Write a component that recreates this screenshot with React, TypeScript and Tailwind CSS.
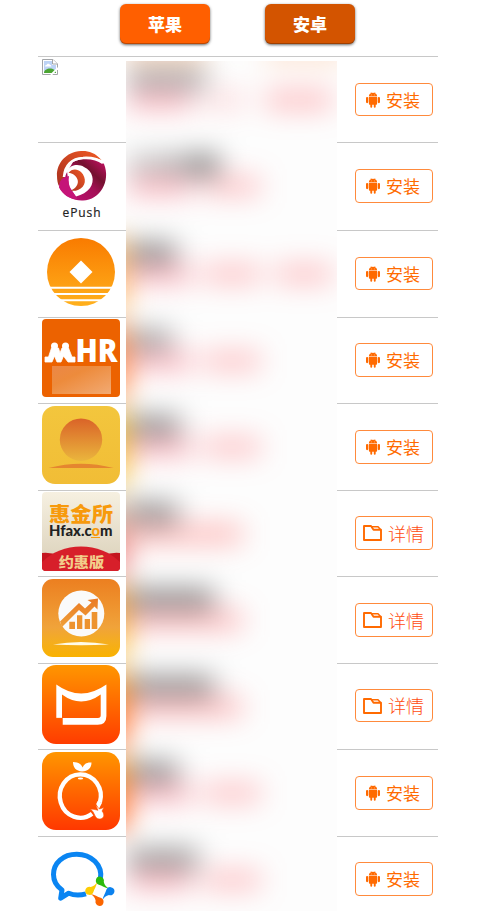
import React from 'react';

const cjk = 'font-["Noto_Sans_CJK_SC",sans-serif]';

function Missing() {
  return (
    <svg width="16" height="16" viewBox="0 0 16 16" className="block">
      <path d="M.5.5h10.500l4.500 4.500v10.500H.5z" fill="#fff" stroke="#a3a5a8" />
      <path d="M2 2h8v4h4v8H2z" fill="#bdd3f5" />
      <path d="M10.500.5V5h5" fill="#fff" stroke="#a3a5a8" />
      <path d="M3 7.500c0-1.400 1-1.600 1.500-1.600C5 4.300 7.500 4.300 8 6c1 0 1.300.5 1.300 1.500z" fill="#fff" />
      <path d="M2 14c0-3 3-4.500 6-4.500s6 1.500 6 4.500z" fill="#4ca532" />
      <path d="M9 16l7-7" stroke="#fff" strokeWidth="1.800" />
    </svg>
  );
}

function EPush() {
  return (
    <svg width="78" height="78" viewBox="0 0 78 78" className="block">
      <defs>
        <linearGradient id="epM" x1="0" y1="1" x2="1" y2="0">
          <stop offset="0" stopColor="#c4107a" />
          <stop offset=".5" stopColor="#a30f55" />
          <stop offset=".68" stopColor="#74112f" />
          <stop offset="1" stopColor="#d0106c" />
        </linearGradient>
        <linearGradient id="epO" x1="0" y1="1" x2="1" y2="0">
          <stop offset="0" stopColor="#a8301f" />
          <stop offset="1" stopColor="#f05a24" />
        </linearGradient>
      </defs>
      <path d="M31 17c10-5 25-5 31 2 7 17-4 36-21 36.500-9 .5-18-4-23-12 0-5 1-9 4-11z" fill="url(#epM)" />
      <path d="M25 26c4-7 12-7 17-4 9 4 11 14 6 21-3 4-8 7-14 8.500l-7-9z" fill="#fff" />
      <path d="M59.500 15C53 7 45 5.500 39 6 24 7 14.500 18 15 31c0 4 .8 8 2 10l5-7c.5-12 7-20 19-21.500 7-.5 13 .5 18.500 2.500z" fill="url(#epO)" />
      <path d="M22 32C23 20 30 13.500 41 13c7-.5 14 .5 20 5" fill="none" stroke="#fff" strokeWidth="2.600" />
      <path d="M17 42.500c0-5 1.500-8 4-9.500l6-2c-1 6 0 11 3 14.500l5.500 8.500C28 54.500 21 50 17 42.500z" fill="#c51478" />
      <path d="M26.500 28c3-4.500 9-4.500 12.500-1 6 6 5 15-3 18-3 1-5 1-7 .5 5-2 8-7 6.500-11-1.500-4-5-6.500-9-6.500z" fill="url(#epO)" />
      <text x="20.500" y="72.300" fontSize="12" textLength="38" className='font-["Open_Sans",sans-serif]' fill="#222" stroke="#222" strokeWidth=".2">ePush</text>
    </svg>
  );
}

function Coin() {
  return (
    <svg width="78" height="78" viewBox="0 0 78 78" className="block">
      <defs>
        <linearGradient id="coin" x1="0" y1="0" x2="0" y2="1">
          <stop offset="0" stopColor="#f97b00" />
          <stop offset="1" stopColor="#ffb01c" />
        </linearGradient>
      </defs>
      <circle cx="39" cy="39" r="34" fill="url(#coin)" />
      <path d="M39 27.500 50.500 39 39 50.500 27.500 39z" fill="#fff" />
      <path d="M0 54.700h78M0 61h78M0 67.200h78" stroke="#fff" strokeWidth="2" />
    </svg>
  );
}

function Mhr() {
  return (
    <svg width="78" height="78" viewBox="0 0 78 78" className="block">
      <defs>
        <linearGradient id="mhr" x1="0" y1="0" x2="1" y2="1">
          <stop offset="0" stopColor="#eb8747" />
          <stop offset=".35" stopColor="#ed8b3c" />
          <stop offset="1" stopColor="#f2aa73" />
        </linearGradient>
      </defs>
      <rect width="78" height="78" rx="4" fill="#ec6200" />
      <circle cx="12.500" cy="27" r="3.500" fill="#fff" />
      <circle cx="23.500" cy="27" r="3.500" fill="#fff" />
      <path d="M3 38h3.500L9.500 29h7l1.500 5 2-5h6.500l3.500 9H33v5h-7l-4.500-6-2.500 6h-4L12.500 37 10 43H3z" fill="#fff" stroke="#fff" strokeWidth=".8" strokeLinejoin="round" />
      <text x="33.500" y="43" fontSize="32" fontWeight="800" textLength="42" lengthAdjust="spacingAndGlyphs" className='font-["Open_Sans",sans-serif]' fill="#fff">HR</text>
      <rect x="10" y="47" width="59" height="28" fill="url(#mhr)" />
    </svg>
  );
}

function Sunrise() {
  return (
    <svg width="78" height="78" viewBox="0 0 78 78" className="block">
      <defs>
        <linearGradient id="sun" x1="0" y1="0" x2="0" y2="1">
          <stop offset="0" stopColor="#da6328" />
          <stop offset="1" stopColor="#eab53d" />
        </linearGradient>
        <linearGradient id="sunBg" x1="0" y1="0" x2="0" y2="1">
          <stop offset="0" stopColor="#f3c63d" />
          <stop offset="1" stopColor="#f1bd36" />
        </linearGradient>
      </defs>
      <rect width="78" height="78" rx="13" fill="url(#sunBg)" />
      <circle cx="39" cy="33.700" r="21.200" fill="url(#sun)" />
      <path d="M6.500 62Q39 53.500 71.500 62z" fill="#e5862f" />
    </svg>
  );
}

function Hfax() {
  return (
    <svg width="78" height="79" viewBox="0 0 78 79" className="block">
      <defs>
        <linearGradient id="hf" x1="0" y1="0" x2="0" y2="1">
          <stop offset="0" stopColor="#f6f0e1" />
          <stop offset="1" stopColor="#d9cfb8" />
        </linearGradient>
        <clipPath id="hfc"><rect width="78" height="79" rx="4" /></clipPath>
      </defs>
      <g clipPath="url(#hfc)">
        <rect width="78" height="79" fill="url(#hf)" />
        <path d="M0 61q9-1 17 3l-4 15H0zM78 61q-9-1-17 3l4 15h13z" fill="#c4161f" />
        <path d="M0 79V70Q16 54.500 39 54.500T78 70v9z" fill="#d71f2a" />
        <text x="7" y="29.800" fontSize="20" fontWeight="900" textLength="64" lengthAdjust="spacingAndGlyphs" className={cjk} fill="#f79a0c">惠金所</text>
        <text x="7" y="43.600" fontSize="14.500" fontWeight="900" textLength="63.500" lengthAdjust="spacingAndGlyphs" className='font-[Lato,sans-serif]' fill="#222">Hfax.c<tspan fill="#f79a0c">o</tspan>m</text>
        <path d="M49 45.500h9" stroke="#f79a0c" strokeWidth="1" />
        <text x="16.700" y="74.500" fontSize="13.500" fontWeight="900" textLength="45.500" lengthAdjust="spacingAndGlyphs" className={cjk} fill="#f2cd8b">约惠版</text>
      </g>
    </svg>
  );
}

function Growth() {
  return (
    <svg width="78" height="78" viewBox="0 0 78 78" className="block">
      <defs>
        <linearGradient id="gr" x1="0" y1="0" x2="0" y2="1">
          <stop offset="0" stopColor="#ec7f20" />
          <stop offset=".62" stopColor="#f0a33a" />
          <stop offset=".8" stopColor="#f4ad20" />
          <stop offset="1" stopColor="#f9b200" />
        </linearGradient>
        <linearGradient id="grA" x1="0" y1="0" x2="0" y2="1">
          <stop offset="0" stopColor="#ea7a24" />
          <stop offset="1" stopColor="#efa039" />
        </linearGradient>
      </defs>
      <rect width="78" height="78" rx="11" fill="url(#gr)" />
      <circle cx="39.300" cy="34.500" r="23" fill="#fafafa" />
      <path d="M18 42.500 37 24l6 5.500 6.500-6-4-2.500 10.500-1.500-.5 11-3-3-9 9-6.500-5.500-17 17z" fill="url(#grA)" />
      <path d="M27.300 42.700H33V50h-5.700zM35 36.300h5.300V50H35zM42.700 40H48v10h-5.300zM49.700 33h5.600v17h-5.600z" fill="#ed932f" />
      <path d="M11 65.500Q39 60.500 67 65.500 39 67 11 65.500z" fill="#fffbe8" />
    </svg>
  );
}

function Envelope() {
  return (
    <svg width="78" height="79" viewBox="0 0 78 79" className="block">
      <defs>
        <linearGradient id="env" x1="0" y1="0" x2="0" y2="1">
          <stop offset="0" stopColor="#ff9600" />
          <stop offset="1" stopColor="#ff3c00" />
        </linearGradient>
      </defs>
      <rect width="78" height="79" rx="14" fill="url(#env)" />
      <path fillRule="evenodd" d="M14.300 19.500Q39 37.500 64.400 19.500V51q0 8.700-8.700 8.700H20.500V53h-6.200zM20 29.500V53h36q2.700 0 2.700-2.700V29.500Q39 43.500 20 29.500z" fill="#fff" />
      <path d="M14 53.300h6.200V60" fill="none" stroke="#ff6500" strokeWidth=".7" />
    </svg>
  );
}

function Orange() {
  return (
    <svg width="78" height="78" viewBox="0 0 78 78" className="block">
      <defs>
        <linearGradient id="org" x1="0" y1="0" x2="0" y2="1">
          <stop offset="0" stopColor="#ff9600" />
          <stop offset="1" stopColor="#ff3800" />
        </linearGradient>
      </defs>
      <rect width="78" height="78" rx="14" fill="url(#org)" />
      <path d="M50.100 61.800A20.500 21.700 0 1 1 57.900 50.400" fill="none" stroke="#fff" strokeWidth="4.300" />
      <path d="M60 51l-3.200 6-2.600-5 1.400-3z" fill="#fff" />
      <path d="M40 19.500c-6-.5-9-4-9-9.500 5 0 8.500 2 9.500 5.500C42 12 45 10 49.500 10.500 49.500 16 46 19.500 40 19.500z" fill="#fff" />
      <ellipse cx="38.500" cy="26.500" rx="2.700" ry="1" fill="#fff" />
      <path d="M48.500 57c4 .2 5.500 1 7.500 1.300L53.500 53l4 4 4.500-1.500-2 3.500c3.500 4 1.500 8.500-3 8-4.500-.5-4-6.500-8.500-10z" fill="#fff" stroke="#ff5200" strokeWidth=".6" />
    </svg>
  );
}

function Chat() {
  return (
    <svg width="78" height="76" viewBox="0 0 78 76" className="block">
      <path d="M58.400 40C61 26 49 15.200 34.700 15.200 21 15.200 11.500 24 11.500 35.500c0 7 3.500 12 8.500 15.500l-1.300 8.200 8-5c5 2 12 2 17.300.6" fill="none" stroke="#0a85f2" strokeWidth="5" strokeLinejoin="round" />
      <path d="M57.700 37.500a4.300 4.300 0 0 1 4.100 5.500c.5 3 2.500 5 5 6.500-4-.6-7-3-10-3.800a4.200 4.200 0 0 1 .9-8.200z" fill="#2bbb0d" />
      <path d="M72.500 52a4.300 4.300 0 0 1-5.500 4.100c-3 .5-5 2.500-6.500 5 .6-4 3-7 3.800-10a4.200 4.200 0 0 1 8.200.9z" fill="#0c82ee" />
      <path d="M57.700 67a4.300 4.300 0 0 1-4.100-5.500c-.5-3-2.500-5-5-6.500 4 .6 7 3 10 3.800a4.200 4.200 0 0 1-.9 8.200z" fill="#fb6500" />
      <path d="M43.200 52a4.300 4.300 0 0 1 5.500-4.100c3-.5 5-2.500 6.500-5-.6 4-3 7-3.800 10a4.200 4.200 0 0 1-8.200-.9z" fill="#fdcc04" />
    </svg>
  );
}

function AndroidIcon() {
  return (
    <svg width="14" height="16" viewBox="0 0 14 16" className="block" fill="#ff6a00">
      <path d="M2.900 4.300C3 2.500 4.200 1.400 5.200 1L4.600.2l.4-.2.700.9a4.500 4.500 0 0 1 2.600 0L9 0l.4.200-.6.800c1 .4 2.200 1.500 2.300 3.300z" />
      <path d="M2.900 4.800h8.200v7q0 .9-.9.900h-.5v2q0 1-.95 1t-.95-1v-2H6.200v2q0 1-.95 1t-.95-1v-2h-.5q-.9 0-.9-.9z" />
      <rect x="0" y="5" width="2.300" height="6.200" rx="1.100" />
      <rect x="11.700" y="5" width="2.300" height="6.200" rx="1.100" />
      <circle cx="5.300" cy="2.900" r=".4" fill="#fff" />
      <circle cx="8.700" cy="2.900" r=".4" fill="#fff" />
    </svg>
  );
}

function FolderIcon() {
  return (
    <svg width="19" height="16" viewBox="0 0 19 16" className="block" fill="none" stroke="#ff6a00" strokeWidth="1.900" strokeLinejoin="round">
      <path d="M1 1h7l2.500 3.800H18V15H1z" />
      <path d="M8 1.800h7L17.700 4.800" strokeWidth="1.600" />
    </svg>
  );
}

type Row = {
  h: string;
  pt: string;
  bt: string;
  bh: string;
  icon: React.ReactNode;
  detail?: boolean;
};

const rows: Row[] = [
  { h: 'h-[86px]', pt: 'pt-[2px]', bt: 'mt-[26px]', bh: 'h-[33px]', icon: <Missing /> },
  { h: 'h-[88px]', pt: 'pt-[2px]', bt: 'mt-[26px]', bh: 'h-[34px]', icon: <EPush /> },
  { h: 'h-[87px]', pt: 'pt-[2px]', bt: 'mt-[26px]', bh: 'h-[33px]', icon: <Coin /> },
  { h: 'h-[86px]', pt: 'pt-[1px]', bt: 'mt-[25px]', bh: 'h-[34px]', icon: <Mhr /> },
  { h: 'h-[87px]', pt: 'pt-[2px]', bt: 'mt-[26px]', bh: 'h-[34px]', icon: <Sunrise /> },
  { h: 'h-[86px]', pt: 'pt-[1px]', bt: 'mt-[25px]', bh: 'h-[34px]', icon: <Hfax />, detail: true },
  { h: 'h-[87px]', pt: 'pt-[2px]', bt: 'mt-[26px]', bh: 'h-[34px]', icon: <Growth />, detail: true },
  { h: 'h-[86px]', pt: 'pt-[1px]', bt: 'mt-[25px]', bh: 'h-[33px]', icon: <Envelope />, detail: true },
  { h: 'h-[87px]', pt: 'pt-[2px]', bt: 'mt-[26px]', bh: 'h-[34px]', icon: <Orange /> },
  { h: 'h-[80px]', pt: 'pt-[2px]', bt: 'mt-[25px]', bh: 'h-[34px]', icon: <Chat /> },
];

type Frost = { h: string; edge: string; title: string; tags: string[] };

const tagA = 'w-[64px] bg-[#ff4058]/38';
const tagB = 'ml-[12px] w-[56px] bg-[#ff5058]/36';
const tagC = 'ml-[16px] w-[56px] bg-[#ff5058]/36';

const frost: Frost[] = [
  { h: 'h-[86px]', edge: 'bg-transparent', title: 'w-[78px] bg-black/35', tags: [tagA, 'ml-[12px] w-[40px] bg-[#ff5058]/20', 'ml-[22px] w-[66px] bg-[#ff5058]/38'] },
  { h: 'h-[88px]', edge: 'bg-transparent', title: 'w-[90px] bg-linear-to-r from-black/22 via-black/30 to-black/65', tags: [tagA, tagB] },
  { h: 'h-[87px]', edge: 'bg-[#ff9a20]/70', title: 'w-[48px] bg-black/48', tags: [tagA, tagB, tagC] },
  { h: 'h-[86px]', edge: 'bg-[#ff6200]/80', title: 'w-[44px] bg-black/38', tags: [tagA, tagB] },
  { h: 'h-[87px]', edge: 'bg-[#f5b81c]', title: 'w-[52px] bg-black/46', tags: [tagA, tagB] },
  { h: 'h-[86px]', edge: 'bg-linear-to-b from-[#d5cfb0] to-[#e54050]', title: 'w-[50px] bg-black/46', tags: ['w-[114px] bg-[#ff4a48]/40'] },
  { h: 'h-[87px]', edge: 'bg-linear-to-b from-[#e98420] to-[#ffc020]', title: 'w-[86px] bg-black/48', tags: ['w-[114px] bg-[#ff4a50]/40'] },
  { h: 'h-[86px]', edge: 'bg-linear-to-b from-[#ff9600] to-[#ff3c00]', title: 'w-[86px] bg-black/46', tags: ['w-[114px] bg-[#ff4a50]/40'] },
  { h: 'h-[87px]', edge: 'bg-linear-to-b from-[#ff9600] to-[#ff3800]', title: 'w-[50px] bg-black/46', tags: [tagA, tagB] },
  { h: 'h-[86px]', edge: 'bg-transparent', title: 'w-[70px] bg-black/42', tags: [tagA, tagB] },
];

function FrostedColumn() {
  return (
    <div className="absolute top-[5px] left-[88px] h-[850px] w-[211px] overflow-hidden bg-[#fdfdfd]">
      <div className="-mt-[5px] blur-[14px]">
        <div className="flex h-0">
          <div className="-mt-[10px] h-[14px] w-[80px] shrink-0 bg-[#ff7a20]/40" />
          <div className="-mt-[10px] ml-[60px] h-[14px] w-[80px] shrink-0 bg-[#ff7a20]/30" />
        </div>
        {frost.map((f, i) => (
          <div key={i} className={`flex ${f.h}`}>
            <div className={`-ml-[21px] mt-[8px] h-[72px] w-[21px] shrink-0 ${f.edge}`} />
            <div className="w-[210px] shrink-0 pt-[13px] pl-[2px]">
              <div className={`h-[20px] ${f.title}`} />
              <div className="mt-[2px] flex">
                {f.tags.map((t, j) => (
                  <div key={j} className={`h-[18px] shrink-0 ${t}`} />
                ))}
              </div>
            </div>
          </div>
        ))}
      </div>
    </div>
  );
}

export default function App() {
  return (
    <div className={`h-[916px] w-[497px] overflow-hidden bg-white ${cjk}`}>
      <header className="flex h-[56px] items-start gap-[55px] pt-1 pl-[120px] text-[17px] font-black text-white [text-shadow:0_-1px_1px_rgba(0,0,0,0.25)]">
        <button className="h-10 w-[90px] rounded-[6px] bg-[#ff5f00] leading-10 shadow-[0_1px_3px_rgba(0,0,0,0.6),inset_0_-1px_0_rgba(0,0,0,0.25)]">苹果</button>
        <button className="h-10 w-[90px] rounded-[6px] bg-[#d35400] leading-10 shadow-[0_1px_3px_rgba(0,0,0,0.6),inset_0_-1px_0_rgba(0,0,0,0.25)]">安卓</button>
      </header>
      <main className="relative ml-[38px] w-[400px]">
        {rows.map((r, i) => (
          <div key={i} className={`flex justify-between border-t border-[#c8c8c8] pr-[5px] pl-1 ${r.h}`}>
            <div className={r.pt}>{r.icon}</div>
            <button className={`flex w-[78px] items-center rounded-[4px] border border-[#ff8a3c] ${r.bt} ${r.bh} ${r.detail ? 'gap-[6px] pl-[7px] text-[18px] font-light text-[#ff4c10]' : 'gap-[6px] pl-[10px] text-[17px] text-[#ff6a00]'}`}>
              {r.detail ? <FolderIcon /> : <AndroidIcon />}
              <span className="-mt-[1px] leading-none whitespace-nowrap">{r.detail ? '详情' : '安装'}</span>
            </button>
          </div>
        ))}
        <FrostedColumn />
      </main>
    </div>
  );
}
